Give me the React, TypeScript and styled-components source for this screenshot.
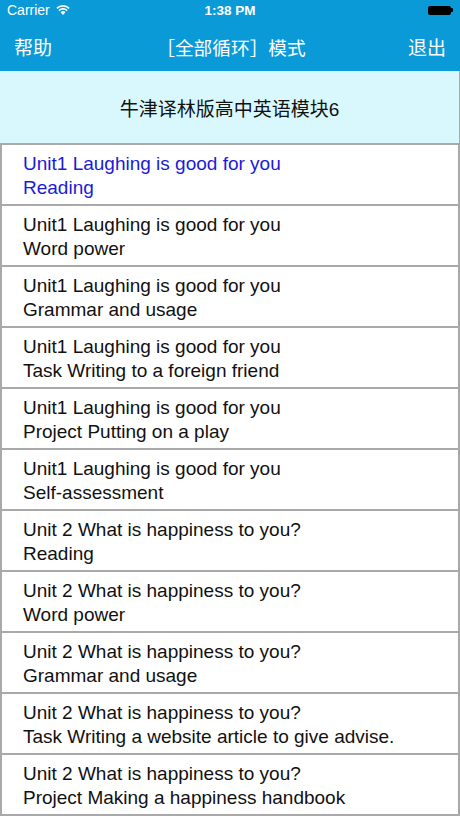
import React from 'react';
import styled, { createGlobalStyle } from 'styled-components';

const GlobalStyle = createGlobalStyle`
    html, body {
        margin: 0;
        padding: 0;
        background: #ffffff;
    }
    body {
        font-family: "Liberation Sans", "Noto Sans CJK SC", sans-serif;
    }
`;

const Page = styled.div`
    width: 460px;
    height: 818px;
    overflow: hidden;
    display: flex;
    flex-direction: column;
`;

const TopBar = styled.div`
    background-color: #0b9ad8;
    color: #ffffff;
`;

const StatusBar = styled.div`
    height: 20px;
    display: grid;
    grid-template-columns: 1fr auto 1fr;
    align-items: center;
    padding: 0 7px;
    font-size: 14px;
`;

const Carrier = styled.div`
    display: flex;
    align-items: center;
    gap: 6px;
`;

const Clock = styled.div`
    font-weight: bold;
    font-size: 13.5px;
`;

const Battery = styled.div`
    justify-self: end;
    display: flex;
    align-items: center;
`;

const BatteryBody = styled.div`
    width: 23px;
    height: 9px;
    background: #000000;
    border-radius: 2px;
`;

const BatteryTip = styled.div`
    width: 2px;
    height: 4px;
    background: #000000;
    border-radius: 0 1px 1px 0;
`;

const NavBar = styled.div`
    height: 51px;
    box-sizing: border-box;
    display: grid;
    grid-template-columns: 1fr auto 1fr;
    align-items: center;
    padding: 2px 14px 0;
`;

const NavButton = styled.div<{ $align: 'left' | 'right' }>`
    justify-self: ${props => props.$align === 'left' ? 'start' : 'end'};
    font-size: 19px;
`;

const NavTitle = styled.div`
    font-size: 18.7px;
    margin-left: 2px;
`;

const Header = styled.div`
    height: 72px;
    background-color: #d9f8fe;
    display: flex;
    align-items: center;
    justify-content: center;
    font-size: 19px;
    color: #111111;
    border-right: 1px solid #aaaaaa;
    box-sizing: border-box;
`;

const List = styled.div`
    display: flex;
    flex-direction: column;
    border-top: 2px solid #a9a9a9;
`;

const Row = styled.div<{ $active?: boolean }>`
    height: 61px;
    box-sizing: border-box;
    padding: 7px 0 0 21px;
    border-left: 2px solid #a9a9a9;
    border-right: 2px solid #a9a9a9;
    border-bottom: 2px solid #a9a9a9;
    color: ${props => props.$active ? '#1b1bd8' : '#111111'};
    font-size: 19px;
    line-height: 24px;
    flex-shrink: 0;
`;

const Line = styled.div`
    white-space: nowrap;
`;

const lessons: [string, string][] = [
    ['Unit1 Laughing is good for you', 'Reading'],
    ['Unit1 Laughing is good for you', 'Word power'],
    ['Unit1 Laughing is good for you', 'Grammar and usage'],
    ['Unit1 Laughing is good for you', 'Task Writing to a foreign friend'],
    ['Unit1 Laughing is good for you', 'Project Putting on a play'],
    ['Unit1 Laughing is good for you', 'Self-assessment'],
    ['Unit 2 What is happiness to you?', 'Reading'],
    ['Unit 2 What is happiness to you?', 'Word power'],
    ['Unit 2 What is happiness to you?', 'Grammar and usage'],
    ['Unit 2 What is happiness to you?', 'Task Writing a website article to give advise.'],
    ['Unit 2 What is happiness to you?', 'Project Making a happiness handbook'],
];

function WifiIcon() {
    return (
        <svg width="14" height="10" viewBox="0 0 14 10">
            <path d="M7 10 L4.6 7.3 A3.4 3.4 0 0 1 9.4 7.3 Z" fill="#ffffff" />
            <path d="M2.9 5.6 A5.8 5.8 0 0 1 11.1 5.6" stroke="#ffffff" strokeWidth="1.6" fill="none" />
            <path d="M0.9 3.4 A8.6 8.6 0 0 1 13.1 3.4" stroke="#ffffff" strokeWidth="1.6" fill="none" />
        </svg>
    );
}

export default function App() {
    return (
        <>
            <GlobalStyle />
            <Page>
                <TopBar>
                    <StatusBar>
                        <Carrier>Carrier <WifiIcon /></Carrier>
                        <Clock>1:38 PM</Clock>
                        <Battery>
                            <BatteryBody />
                            <BatteryTip />
                        </Battery>
                    </StatusBar>
                    <NavBar>
                        <NavButton $align="left">帮助</NavButton>
                        <NavTitle>［全部循环］模式</NavTitle>
                        <NavButton $align="right">退出</NavButton>
                    </NavBar>
                </TopBar>
                <Header>牛津译林版高中英语模块6</Header>
                <List>
                    {lessons.map(([unit, part], index) => (
                        <Row key={index} $active={index === 0}>
                            <Line>{unit}</Line>
                            <Line>{part}</Line>
                        </Row>
                    ))}
                </List>
            </Page>
        </>
    );
}
